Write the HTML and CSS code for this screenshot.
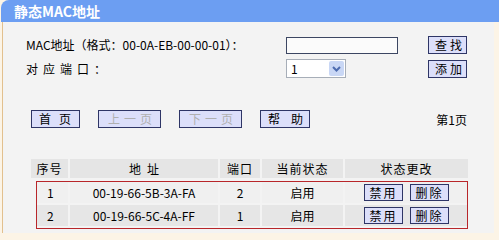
FILE: index.html
```
<!DOCTYPE html>
<html lang="zh-CN">
<head>
    <meta charset="UTF-8">
    <title>静态MAC地址</title>
    <link rel="stylesheet" href="styles.css">
</head>
<body>
    <div class="title">静态MAC地址</div>
    <div class="content">
        <!-- 查找 / 添加 -->
        <div class="form">
            <span class="label">MAC地址（格式：00-0A-EB-00-00-01）：</span>
            <span><input class="mac" type="text"></span>
            <button class="btn">查找</button>

            <span class="label spaced">对应端口：</span>
            <span class="select">
                <span class="value">1</span>
                <span class="arrow">
                    <svg width="9" height="6" viewBox="0 0 9 6"><path d="M1 1 L4.5 4.5 L8 1" fill="none" stroke="#4d6cb0" stroke-width="2"/></svg>
                </span>
            </span>
            <button class="btn">添加</button>
        </div>

        <!-- 翻页 -->
        <div class="pager">
            <button class="btn first">首页</button>
            <button class="btn page off">上一页</button>
            <button class="btn page off">下一页</button>
            <button class="btn help">帮助</button>
            <span class="pageno">第1页</span>
        </div>

        <!-- 列表 -->
        <div class="head">
            <span>序号</span>
            <span class="wide">地址</span>
            <span>端口</span>
            <span>当前状态</span>
            <span>状态更改</span>
        </div>
        <div class="rows">
            <div class="row">
                <span class="num">1</span>
                <span>00-19-66-5B-3A-FA</span>
                <span>2</span>
                <span>启用</span>
                <span class="ops"><button class="btn small">禁用</button><button class="btn small">删除</button></span>
            </div>
            <div class="row alt">
                <span class="num">2</span>
                <span>00-19-66-5C-4A-FF</span>
                <span>1</span>
                <span>启用</span>
                <span class="ops"><button class="btn small">禁用</button><button class="btn small">删除</button></span>
            </div>
        </div>
    </div>
</body>
</html>
```

FILE: styles.css
```
body {
    margin: 0;
    width: 499px;
    height: 240px;
    overflow: hidden;
    background-color: #fcf4e6;
    font-family: "Noto Sans CJK SC", sans-serif;
    font-size: 12px;
    color: #000;
}
.title {
    height: 22px;
    margin-left: 1px;
    padding-left: 13px;
    line-height: 22px;
    background-color: #6c9ef2;
    border-top-left-radius: 8px;
    color: #fff;
    font-size: 14px;
    font-weight: bold;
}
.content {
    height: 211px;
    margin-left: 2px;
    margin-right: 5px;
    border-left: 1px solid #e2c08e;
    background-color: #f3f3f3;
    padding-top: 14px;
    box-sizing: border-box;
}
.form {
    display: grid;
    grid-template-columns: 260px 142px 39px;
    grid-template-rows: 18px 19px;
    row-gap: 5px;
    align-items: center;
    padding-left: 23px;
}
.label {
    line-height: 18px;
}
.spaced {
    letter-spacing: 5px;
}
.mac {
    display: block;
    width: 112px;
    height: 17px;
    box-sizing: border-box;
    border: 1px solid #3c4662;
    background-color: #fbfbfb;
    padding: 0;
    margin: 0;
}
.btn {
    font-family: "Noto Sans CJK SC", sans-serif;
    font-size: 12px;
    height: 18px;
    padding: 0;
    margin: 0;
    line-height: 16px;
    border: 1px solid #2e3566;
    background-color: #dcdffa;
    color: #000;
    white-space: nowrap;
    text-align: left;
}
.form .btn {
    width: 39px;
    letter-spacing: 3px;
    padding-left: 6px;
}
.select {
    display: flex;
    align-items: center;
    justify-content: space-between;
    width: 60px;
    height: 19px;
    box-sizing: border-box;
    border: 1px solid #a7aeb8;
    background-color: #fff;
    padding: 1px;
}
.value {
    padding-left: 3px;
}
.arrow {
    display: flex;
    align-items: center;
    justify-content: center;
    width: 15px;
    height: 15px;
    background-color: #c9d7f5;
    border-radius: 2px;
}
.pager {
    display: flex;
    align-items: center;
    gap: 18px;
    margin-top: 32px;
    padding-left: 28px;
    padding-right: 27px;
}
.first {
    width: 49px;
    letter-spacing: 8px;
    padding-left: 7px;
}
.page {
    width: 63px;
    letter-spacing: 4px;
    padding-left: 9px;
}
.help {
    width: 50px;
    letter-spacing: 11px;
    padding-left: 7px;
}
.off {
    color: #b0b0b0;
}
.pageno {
    margin-left: auto;
}
.head,
.row {
    display: grid;
    grid-template-columns: 37px 148px 40px 81px 123px;
    column-gap: 2px;
    text-align: center;
}
.head {
    margin-top: 31px;
    margin-left: 28px;
    width: 437px;
    letter-spacing: 1px;
}
.head .wide {
    letter-spacing: 6px;
    padding-left: 6px;
}
.head span {
    background-color: #e5e5e5;
    line-height: 19px;
}
.rows {
    margin-top: 3px;
    margin-left: 33px;
    width: 430px;
    border: 1px solid #b8262a;
    padding-bottom: 2px;
    display: flex;
    flex-direction: column;
    gap: 2px;
}
.row {
    grid-template-columns: 31px 148px 40px 81px 122px;
}
.row span {
    line-height: 21px;
    background-color: #f0f0f0;
}
.row.alt span {
    background-color: #e6e6e6;
}
.row .num {
    text-align: left;
    padding-left: 10px;
}
.row .ops {
    display: flex;
    justify-content: center;
    align-items: center;
    gap: 7px;
}
.small {
    width: 39px;
    height: 17px;
    letter-spacing: 2px;
    padding-left: 5px;
}
```
